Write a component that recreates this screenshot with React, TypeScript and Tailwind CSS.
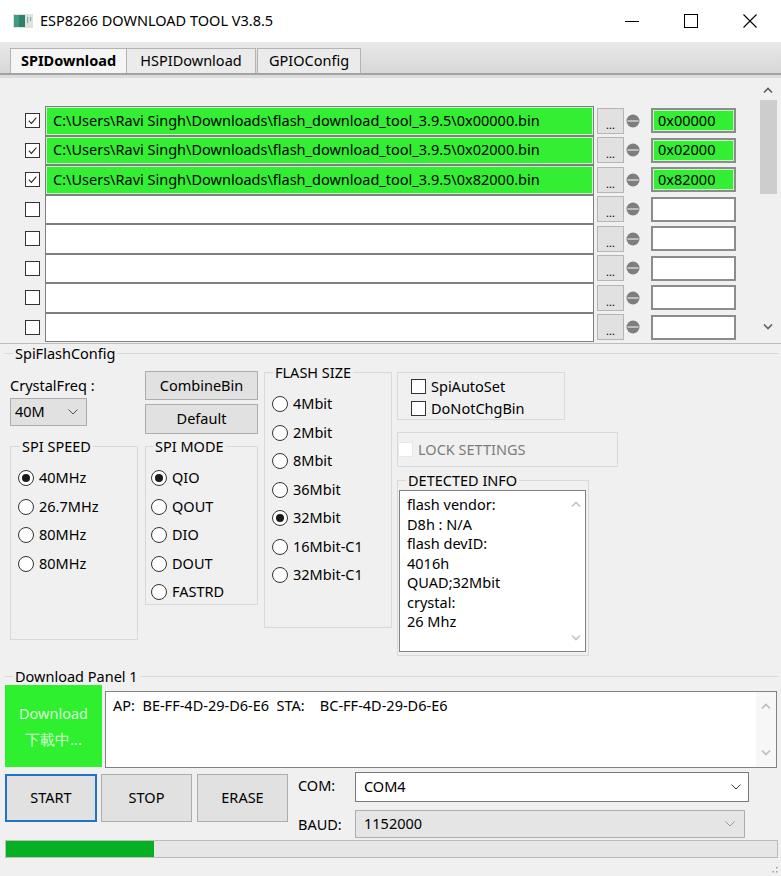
import React from 'react';

const FONT = "font-['Segoe_UI','Noto_Sans',sans-serif]";

const Check = ({ checked, faded }: { checked?: boolean; faded?: boolean }) => (
  <span
    className={`flex h-[15px] w-[15px] shrink-0 items-center justify-center border bg-white ${
      faded ? 'border-[#e8e8e8]' : 'border-[#333]'
    }`}
  >
    {checked && (
      <svg viewBox="0 0 12 12" className="h-[11px] w-[11px]">
        <path d="M2 6.2 L4.8 9.2 L10.2 2.8" fill="none" stroke="#222" strokeWidth="1.1" />
      </svg>
    )}
  </span>
);

const Radio = ({ checked }: { checked?: boolean }) => (
  <span className="flex h-[16px] w-[16px] shrink-0 items-center justify-center rounded-full border border-[#333] bg-white">
    {checked && <span className="h-[8px] w-[8px] rounded-full bg-[#1a1a1a]" />}
  </span>
);

const Chevron = ({ color = '#333' }: { color?: string }) => (
  <svg viewBox="0 0 10 6" className="h-[6px] w-[10px]">
    <path d="M0.5 0.5 L5 5 L9.5 0.5" fill="none" stroke={color} strokeWidth="1" />
  </svg>
);

const ArrowUp = ({ color = '#606060' }: { color?: string }) => (
  <svg viewBox="0 0 10 6" className="h-[6px] w-[10px]">
    <path d="M1 5.5 L5 1.5 L9 5.5" fill="none" stroke={color} strokeWidth="1.6" />
  </svg>
);

const ArrowDown = ({ color = '#606060' }: { color?: string }) => (
  <svg viewBox="0 0 10 6" className="h-[6px] w-[10px]">
    <path d="M1 0.5 L5 4.5 L9 0.5" fill="none" stroke={color} strokeWidth="1.6" />
  </svg>
);

const MinusDot = () => (
  <svg viewBox="0 0 14 14" className="ml-[2px] h-[14px] w-[14px] shrink-0">
    <circle cx="7" cy="7" r="6.5" fill="#7e7e7e" />
    <rect x="1.5" y="6.3" width="11" height="1.4" fill="#d9d9d9" />
  </svg>
);

function Group({
  label,
  className = '',
  legendClass = '',
  children,
}: {
  label: string;
  className?: string;
  legendClass?: string;
  children?: React.ReactNode;
}) {
  return (
    <fieldset className={`border border-[#d9d9d9] ${className}`}>
      <legend className={`px-[2px] text-[14.5px] leading-[18px] ${legendClass}`}>{label}</legend>
      {children}
    </fieldset>
  );
}

const files = [
  { checked: true, path: 'C:\\Users\\Ravi Singh\\Downloads\\flash_download_tool_3.9.5\\0x00000.bin', addr: '0x00000' },
  { checked: true, path: 'C:\\Users\\Ravi Singh\\Downloads\\flash_download_tool_3.9.5\\0x02000.bin', addr: '0x02000' },
  { checked: true, path: 'C:\\Users\\Ravi Singh\\Downloads\\flash_download_tool_3.9.5\\0x82000.bin', addr: '0x82000' },
  { checked: false, path: '', addr: '' },
  { checked: false, path: '', addr: '' },
  { checked: false, path: '', addr: '' },
  { checked: false, path: '', addr: '' },
  { checked: false, path: '', addr: '' },
];

function FileRow({ checked, path, addr }: { checked: boolean; path: string; addr: string }) {
  const green = path !== '';
  return (
    <div className="flex h-[29.5px] items-center">
      <div className="ml-[25px] flex w-[15px]">
        <Check checked={checked} />
      </div>
      <div
        className={`ml-[5px] flex h-full w-[549px] items-center border border-[#7f7f7f] pl-[7px] text-[14.5px] ${
          green ? 'bg-[#33ee33] shadow-[inset_0_0_0_1px_#c4f5c4]' : 'bg-white'
        }`}
      >
        {path}
      </div>
      <button className="ml-[3px] flex h-[26px] w-[27px] items-end justify-center border border-[#b5b5b5] bg-[#e1e1e1] pb-[3px] text-[11px] leading-[11px]">
        ...
      </button>
      <MinusDot />
      <div
        className={`ml-[11px] flex h-[25px] w-[85px] items-center border-2 border-[#8c8c8c] pl-[5px] text-[14.5px] ${
          green ? 'bg-[#33ee33] shadow-[inset_0_0_0_1px_#c4f5c4]' : 'bg-white'
        }`}
      >
        {addr}
      </div>
    </div>
  );
}

function Btn({ children, className = '' }: { children: React.ReactNode; className?: string }) {
  return (
    <button className={`flex items-center justify-center border border-[#adadad] bg-[#e1e1e1] text-[14.5px] ${className}`}>
      {children}
    </button>
  );
}

function RadioList({ items, checked }: { items: string[]; checked: number }) {
  return (
    <div className="flex flex-col">
      {items.map((it, i) => (
        <div key={i} className="flex h-[28.5px] items-center gap-[5px] text-[14.5px]">
          <Radio checked={i === checked} />
          <span>{it}</span>
        </div>
      ))}
    </div>
  );
}

export default function App() {
  return (
    <div className={`${FONT} h-[876px] w-[781px] overflow-hidden bg-[#f0f0f0] text-black`}>
      {/* title bar */}
      <div className="flex h-[42px] items-center bg-white">
        <svg viewBox="0 0 20 14" className="ml-[13px] h-[14px] w-[20px]">
          <rect x="0" y="0" width="20" height="14" fill="#dde3e0" />
          <rect x="1" y="1" width="11" height="12" fill="#2f7f6c" />
          <rect x="1" y="1" width="5" height="12" fill="#3f9a84" />
          <rect x="14" y="3" width="1.2" height="6" fill="#9aa5a0" />
          <rect x="17" y="3" width="1.2" height="4" fill="#9aa5a0" />
        </svg>
        <span className="ml-[7px] text-[14.5px]">ESP8266 DOWNLOAD TOOL V3.8.5</span>
        <div className="ml-auto mr-[2px] flex">
          <div className="flex h-[42px] w-[59px] items-center justify-center">
            <span className="h-px w-[14px] bg-black" />
          </div>
          <div className="flex h-[42px] w-[59px] items-center justify-center">
            <span className="h-[14px] w-[14px] border border-black" />
          </div>
          <div className="flex h-[42px] w-[59px] items-center justify-center">
            <svg viewBox="0 0 14 14" className="h-[14px] w-[14px]">
              <path d="M0.5 0.5 L13.5 13.5 M13.5 0.5 L0.5 13.5" stroke="#000" strokeWidth="1.1" />
            </svg>
          </div>
        </div>
      </div>

      {/* tab strip */}
      <div className="flex h-[36px] flex-col bg-gradient-to-b from-[#e9e9e9] to-[#d4d4d4]">
        <div className="mt-[6px] flex h-[25px] pl-[10px] text-[14.5px]">
          <div className="flex w-[117px] items-center justify-center border border-b-0 border-[#b4b4b4] bg-[#f5f5f5] font-bold">
            SPIDownload
          </div>
          <div className="flex w-[129px] items-center justify-center border border-b-0 border-l-0 border-[#b4b4b4] bg-[#ebebeb]">
            HSPIDownload
          </div>
          <div className="ml-[1px] flex w-[104px] items-center justify-center border border-b-0 border-[#b4b4b4] bg-[#ebebeb]">
            GPIOConfig
          </div>
        </div>
        <div className="h-[2px] bg-[#a3a3a3]" />
        <div className="flex-1 bg-[#dcdcdc]" />
      </div>

      {/* file list */}
      <div className="flex h-[266px] border-b border-[#bdbdbd]">
        <div className="flex-1 pt-[28px]">
          {files.map((f, i) => (
            <FileRow key={i} {...f} />
          ))}
        </div>
        <div className="mr-[3px] mt-[2px] flex w-[20px] flex-col items-center bg-[#f0f0f0]">
          <div className="flex h-[20px] items-center">
            <ArrowUp />
          </div>
          <div className="h-[94px] w-[17px] bg-[#cdcdcd]" />
          <div className="flex-1" />
          <div className="mb-[6px] flex h-[20px] items-center">
            <ArrowDown />
          </div>
        </div>
      </div>

      {/* SpiFlashConfig */}
      <Group
        label="SpiFlashConfig"
        className="ml-[4px] mr-[3px] h-[318px] border-x-0 border-b-0"
        legendClass="ml-[9px]"
      >
        <div className="flex pl-[6px]">
          {/* col 1 */}
          <div className="flex w-[128px] flex-col">
            <div className="mt-[13px] h-[20px] text-[14.5px] leading-[20px]">CrystalFreq :</div>
            <div className="mt-[3px] flex h-[28px] w-[77px] items-center justify-between border border-[#adadad] bg-[#e1e1e1] pl-[4px] pr-[8px] text-[14.5px]">
              <span>40M</span>
              <Chevron color="#555" />
            </div>
            <Group label="SPI SPEED" className="mt-[11px] h-[203px]" legendClass="ml-[9px]">
              <div className="pl-[7px] pt-[9px]">
                <RadioList items={['40MHz', '26.7MHz', '80MHz', '80MHz']} checked={0} />
              </div>
            </Group>
          </div>

          {/* col 2 */}
          <div className="ml-[7px] flex w-[113px] flex-col">
            <Btn className="mt-[9px] h-[29px]">CombineBin</Btn>
            <Btn className="mt-[4px] h-[30px]">Default</Btn>
            <Group label="SPI MODE" className="mt-[3px] h-[168px]" legendClass="ml-[7px]">
              <div className="pl-[5px] pt-[9px]">
                <RadioList items={['QIO', 'QOUT', 'DIO', 'DOUT', 'FASTRD']} checked={0} />
              </div>
            </Group>
          </div>

          {/* col 3 */}
          <div className="ml-[6px] flex w-[128px] flex-col">
            <Group label="FLASH SIZE" className="mt-[1px] h-[265px]" legendClass="ml-[8px]">
              <div className="pl-[7px] pt-[9px]">
                <RadioList
                  items={['4Mbit', '2Mbit', '8Mbit', '36Mbit', '32Mbit', '16Mbit-C1', '32Mbit-C1']}
                  checked={4}
                />
              </div>
            </Group>
          </div>

          {/* col 4 */}
          <div className="ml-[5px] flex w-[221px] flex-col">
            <div className="mt-[10px] flex h-[48px] w-[168px] flex-col border border-[#d9d9d9] pl-[13px] pt-[3px]">
              <div className="flex h-[22px] items-center gap-[5px] text-[14.5px]">
                <Check />
                <span>SpiAutoSet</span>
              </div>
              <div className="flex h-[22px] items-center gap-[5px] text-[14.5px]">
                <Check />
                <span>DoNotChgBin</span>
              </div>
            </div>
            <div className="mt-[12px] flex h-[35px] w-[221px] items-center gap-[5px] border border-[#d9d9d9] text-[14.5px] text-[#7d7d7d]">
              <Check faded />
              <span>LOCK SETTINGS</span>
            </div>
            <Group label="DETECTED INFO" className="mt-[4px] h-[185px] w-[192px]" legendClass="ml-[8px]">
              <div className="ml-[1px] mt-[1px] flex h-[162px] w-[187px] border border-[#828282] bg-white">
                <div className="flex-1 pl-[7px] pt-[4px] text-[14.5px] leading-[19.5px]">
                  <div>flash vendor:</div>
                  <div>D8h : N/A</div>
                  <div>flash devID:</div>
                  <div>4016h</div>
                  <div>QUAD;32Mbit</div>
                  <div>crystal:</div>
                  <div>26 Mhz</div>
                </div>
                <div className="flex w-[18px] flex-col items-center justify-between py-[10px]">
                  <ArrowUp color="#c4c4c4" />
                  <ArrowDown color="#c4c4c4" />
                </div>
              </div>
            </Group>
          </div>
        </div>
      </Group>

      {/* Download Panel */}
      <Group
        label="Download Panel 1"
        className="ml-[4px] mr-[3px] mt-[5px] border-x-0 border-b-0"
        legendClass="ml-[9px]"
      >
        <div className="flex">
          <div className="ml-[1px] flex h-[82px] w-[97px] flex-col items-center justify-center gap-[6px] bg-[#2ff02f] text-[14.5px] text-[#d9ffd9]">
            <span className="leading-[20px]">Download</span>
            <span className="leading-[20px]">{'\u4e0b\u8f09\u4e2d...'}</span>
          </div>
          <div className="ml-[3px] mt-[6px] flex h-[77px] w-[672px] border border-[#828282] bg-white">
            <div className="flex-1 whitespace-pre pl-[7px] pt-[3px] text-[14.5px] leading-[20px]">
              {'AP:  BE-FF-4D-29-D6-E6  STA:    BC-FF-4D-29-D6-E6'}
            </div>
            <div className="flex w-[20px] flex-col items-center justify-between bg-[#f7f7f7] py-[11px]">
              <ArrowUp color="#bdbdbd" />
              <ArrowDown color="#bdbdbd" />
            </div>
          </div>
        </div>

        <div className="mt-[4px] flex">
          <button className="ml-[1px] mt-[2px] flex h-[48px] w-[92px] items-center justify-center border-2 border-[#1f74c4] bg-[#e1e1e1] text-[14.5px]">
            START
          </button>
          <Btn className="ml-[4px] mt-[2px] h-[48px] w-[91px]">STOP</Btn>
          <Btn className="ml-[5px] mt-[2px] h-[48px] w-[91px]">ERASE</Btn>
          <div className="ml-[10px] flex flex-col gap-[8px] text-[14.5px]">
            <div className="flex h-[30px] items-start">
              <span className="w-[57px] pt-[3px] leading-[20px]">COM:</span>
              <div className="flex h-[30px] w-[394px] items-center justify-between border border-[#7a7a7a] bg-white pl-[8px] pr-[7px]">
                <span>COM4</span>
                <Chevron />
              </div>
            </div>
            <div className="flex h-[28px] items-center">
              <span className="w-[57px] leading-[20px]">BAUD:</span>
              <div className="flex h-[28px] w-[390px] items-center justify-between border border-[#adadad] bg-[#e5e5e5] pl-[8px] pr-[9px]">
                <span>1152000</span>
                <Chevron color="#999" />
              </div>
            </div>
          </div>
        </div>

        <div className="ml-[1px] mt-[2px] h-[18px] w-[773px] border border-[#bcbcbc] bg-[#e6e6e6]">
          <div className="h-full w-[148px] bg-[#06b025]" />
        </div>
      </Group>

      <div className="flex justify-end pr-[3px] pt-[8px]">
        <svg viewBox="0 0 6 8" className="h-[8px] w-[6px]">
          <rect x="4" y="1" width="1.5" height="1.5" fill="#9a9a9a" />
          <rect x="4" y="5" width="1.5" height="1.5" fill="#9a9a9a" />
          <rect x="0.5" y="5" width="1.5" height="1.5" fill="#9a9a9a" />
        </svg>
      </div>
    </div>
  );
}
